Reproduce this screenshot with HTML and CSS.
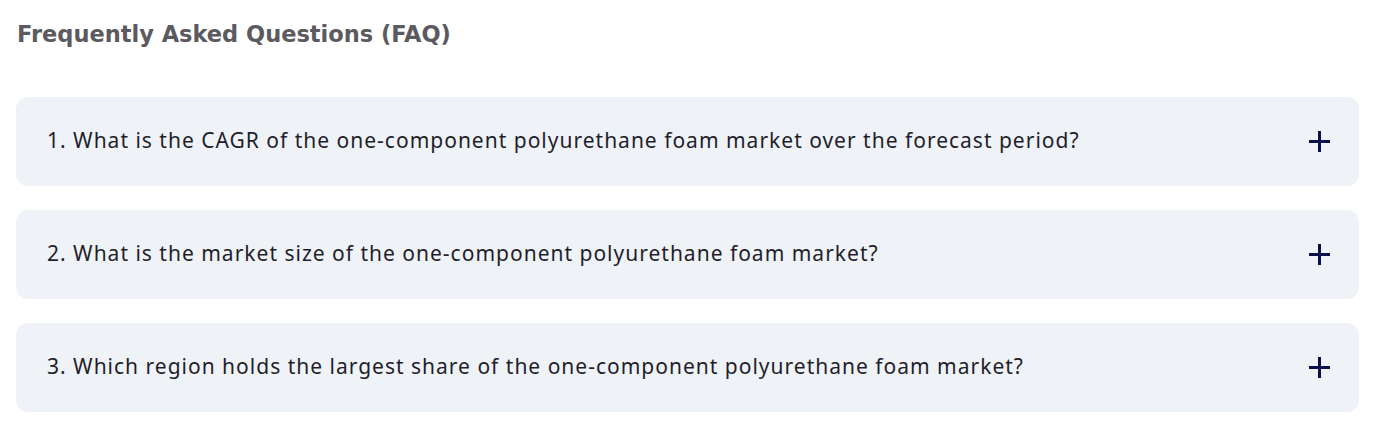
FILE: index.html
```html
<!DOCTYPE html>
<html lang="en">
<head>
    <meta charset="UTF-8">
    <meta name="viewport" content="width=device-width, initial-scale=1.0">
    <title>FAQ</title>
    <link rel="stylesheet" href="styles.css">
</head>
<body>
  <section class="faq">
    <h2 class="faq-title">Frequently Asked Questions (FAQ)</h2>

    <div class="faq-list">
        <div class="faq-item">
            <span class="faq-question">1. What is the CAGR of the one-component polyurethane foam market over the forecast period?</span>
            <span class="faq-toggle"></span>
        </div>
        <div class="faq-item">
            <span class="faq-question">2. What is the market size of the one-component polyurethane foam market?</span>
            <span class="faq-toggle"></span>
        </div>
        <div class="faq-item">
            <span class="faq-question">3. Which region holds the largest share of the one-component polyurethane foam market?</span>
            <span class="faq-toggle"></span>
        </div>
    </div>
  </section>
</body>
</html>
```

FILE: styles.css
```css
body{
    margin: 0;
    background: #fff;
    font-family: "Noto Sans", Arial, sans-serif;
}

.faq{
    padding: 0 19px 0 16px;
}

.faq-title{
    margin: 0;
    padding: 20px 0 0 1px;
    font-family: "DejaVu Sans", "Liberation Sans", sans-serif;
    font-weight: 700;
    font-size: 22.5px;
    line-height: 28px;
    color: #5b5a60;
}

.faq-list{
    display: flex;
    flex-direction: column;
    gap: 24px;
    margin-top: 49px;
}

.faq-item{
    display: flex;
    align-items: center;
    justify-content: space-between;
    height: 89px;
    padding: 0 29px 3px 31px;
    background-color: #eff2f7;
    border-radius: 12px;
    box-sizing: border-box;
}

.faq-question{
    font-size: 21px;
    letter-spacing: 1px;
    color: #1f1f2c;
}

.faq-toggle{
    position: relative;
    width: 21px;
    height: 21px;
    margin-top: 3px;
}

.faq-toggle::before,
.faq-toggle::after{
    content: "";
    position: absolute;
    background: #0b0f4b;
}

.faq-toggle::before{
    left: 0;
    top: 9px;
    width: 21px;
    height: 3px;
}

.faq-toggle::after{
    left: 9px;
    top: 0;
    width: 3px;
    height: 21px;
}
```
